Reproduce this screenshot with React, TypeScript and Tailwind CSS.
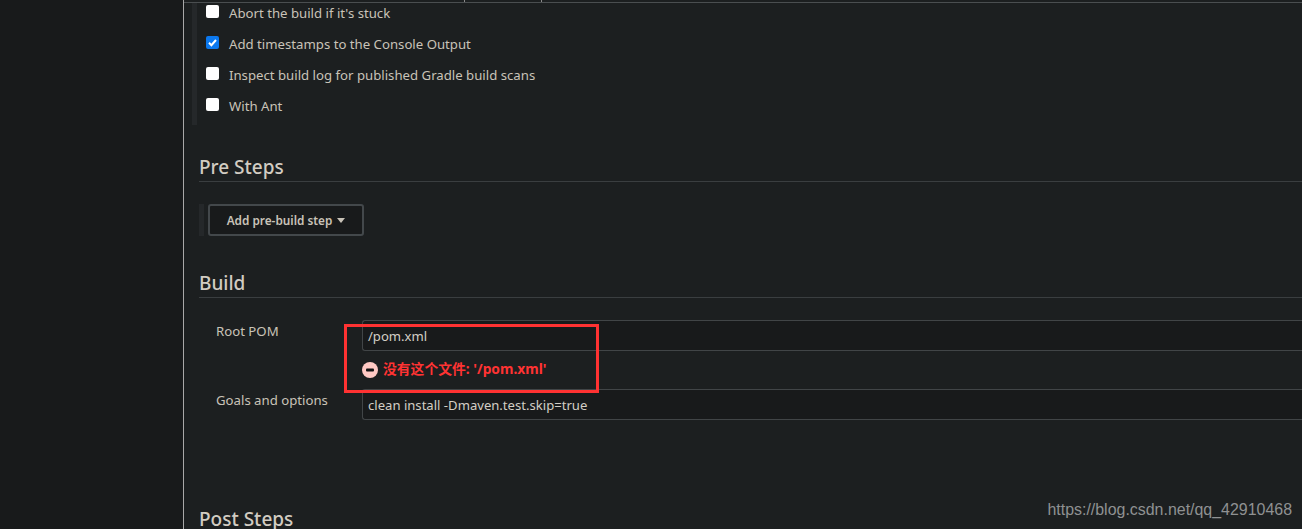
const font = "font-['Noto_Sans','Noto_Sans_CJK_SC',sans-serif]";

function CheckRow({ label, checked }: { label: string; checked?: boolean }) {
  return (
    <div className="flex h-[31px] items-center">
      <div className="mb-[4px] ml-[9px] h-[13px] w-[13px]">
        {checked ? (
          <div className="flex h-[13px] w-[13px] items-center justify-center rounded-[2px] bg-[#0b78ee]">
            <svg width="11" height="11" viewBox="0 0 11 11" fill="none">
              <path d="M2 5.8 L4.4 8.2 L9 3" stroke="white" strokeWidth="2" />
            </svg>
          </div>
        ) : (
          <div className="h-[13px] w-[13px] rounded-[2px] bg-white" />
        )}
      </div>
      <span className="ml-[10px] text-[13.2px] text-[#c9c3b8]">{label}</span>
    </div>
  );
}

function SectionTitle({ children }: { children: string }) {
  return (
    <div className="border-b border-[#3a3e40] text-[19px] leading-[27px] font-medium text-[#d2ccc2]">
      {children}
    </div>
  );
}

function Field({ value }: { value: string }) {
  return (
    <div className="flex h-[31px] items-center rounded-l-[3px] border-y border-l border-[#414547] bg-[#181a1b] pt-[2px] pl-[5px] text-[13.1px] text-[#d3cec5]">
      {value}
    </div>
  );
}

export default function App() {
  return (
    <div className={`relative flex h-[529px] w-[1302px] overflow-hidden bg-[#1c1f20] ${font}`}>
      {/* Sidebar */}
      <div className="h-full w-[183px] shrink-0 bg-[#181a1b]" />
      <div className="h-full w-px shrink-0 bg-[#a8a8a8]" />

      <div className="min-w-0 flex-1">
        {/* Tab bar remnant */}
        <div className="flex h-[3px] border-b border-[#4a4e50] pl-[280px]">
          <div className="h-[2px] w-[78px] border-x border-[#8a8a8a]" />
        </div>

        {/* Options */}
        <div className="ml-[8px] flow-root h-[122px] border-l-[5px] border-[#25282a]">
          <div className="-mt-[6px] pt-px">
            <CheckRow label="Abort the build if it's stuck" />
            <CheckRow label="Add timestamps to the Console Output" checked />
            <CheckRow label="Inspect build log for published Gradle build scans" />
            <CheckRow label="With Ant" />
          </div>
        </div>

        <div className="mt-[29px] ml-[15px]">
          <SectionTitle>Pre Steps</SectionTitle>
        </div>

        <div className="mt-[22px] ml-[15px] flex h-[32px]">
          <div className="w-[5px] bg-[#25282a]" />
          <button className="ml-[4px] flex w-[156px] items-center justify-center gap-[5px] rounded-[3px] border-2 border-[#43484b] bg-[#181a1b] pt-px text-[11.8px] font-semibold text-[#c9c3b8]">
            Add pre-build step
            <span className="mt-[-1px] h-0 w-0 border-x-[4.5px] border-t-[5px] border-x-transparent border-t-[#c9c3b8]" />
          </button>
        </div>

        <div className="mt-[34px] ml-[15px]">
          <SectionTitle>Build</SectionTitle>
        </div>

        <div className="mt-[22px] flex">
          <div className="w-[178px] pl-[32px]">
            <div className="text-[13.2px] leading-[22px] text-[#c9c3b8]">Root POM</div>
          </div>
          <div className="min-w-0 flex-1">
            <Field value="/pom.xml" />
            <div className="flex h-[38px] items-center gap-[5px] pb-[1px] text-[13.8px] font-bold text-[#ff3333]">
              <svg width="16" height="16" viewBox="0 0 16 16">
                <circle cx="8" cy="8" r="8" fill="#ffc9c4" />
                <rect x="4" y="6.5" width="8" height="3" rx="1" fill="#111" />
              </svg>
              <span>没有这个文件: '/pom.xml'</span>
            </div>
          </div>
        </div>

        <div className="flex">
          <div className="w-[178px] pl-[32px]">
            <div className="text-[13.2px] leading-[22px] text-[#c9c3b8]">Goals and options</div>
          </div>
          <div className="min-w-0 flex-1">
            <Field value="clean install -Dmaven.test.skip=true" />
          </div>
        </div>

        <div className="mt-[86px] ml-[15px] text-[19px] leading-[27px] font-medium text-[#d2ccc2]">Post Steps</div>
      </div>

      {/* Annotation box drawn over the page */}
      <div className="absolute top-[324px] left-[344px] h-[69px] w-[255px] border-[3px] border-[#ff3232]" />

      {/* Watermark */}
      <div className="absolute top-[499px] right-[10px] font-['Liberation_Sans',sans-serif] text-[15.95px] leading-[22px] text-[#8f9192]">
        https://blog.csdn.net/qq_42910468
      </div>
    </div>
  );
}
